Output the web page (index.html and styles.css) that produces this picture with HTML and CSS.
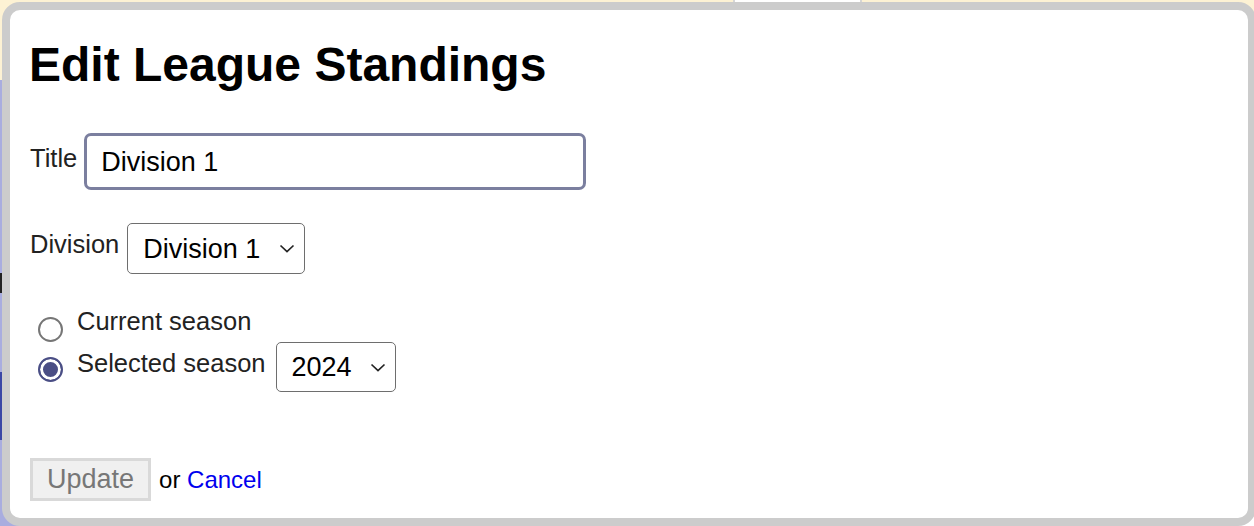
FILE: index.html
```html
<!DOCTYPE html>
<html lang="en">
<head>
  <meta charset="UTF-8">
  <meta name="viewport" content="width=device-width, initial-scale=1.0">
  <title>Edit League Standings</title>
  <link rel="stylesheet" href="styles.css">
</head>
<body>
  <div class="page">
    <header class="topbar">
      <span class="tab"></span>
    </header>
    <aside class="sidebar">
      <span class="nav-item"></span>
      <span class="nav-item active"></span>
    </aside>
    <main class="main"></main>
  </div>

  <div class="dialog">
    <h1>Edit League Standings</h1>
    <form class="standings-form">
      <div class="row row-title">
        <label class="lbl" for="title">Title</label>
        <input class="text" type="text" id="title" value="Division 1">
      </div>
      <div class="row row-division">
        <label class="lbl" for="division">Division</label>
        <span class="select">
          <select id="division">
            <option>Division 1</option>
            <option>Division 2</option>
            <option>Division 3</option>
          </select>
          <svg class="chevron" width="16" height="9" viewBox="0 0 16 9"><polyline points="1.5,1.5 8,7.5 14.5,1.5" fill="none" stroke="#222" stroke-width="1.7"/></svg>
        </span>
      </div>
      <div class="row row-season">
        <label class="choice">
          <input class="radio" type="radio" name="season" value="current">
          <span>Current season</span>
        </label>
      </div>
      <div class="row row-season">
        <label class="choice choice-offset">
          <input class="radio" type="radio" name="season" value="selected" checked>
          <span>Selected season</span>
        </label>
        <span class="select season-select">
          <select id="season">
            <option>2024</option>
            <option>2023</option>
            <option>2022</option>
          </select>
          <svg class="chevron" width="16" height="9" viewBox="0 0 16 9"><polyline points="1.5,1.5 8,7.5 14.5,1.5" fill="none" stroke="#222" stroke-width="1.7"/></svg>
        </span>
      </div>
      <div class="actions">
        <button type="submit" disabled>Update</button>
        <span class="or">or <a href="#">Cancel</a></span>
      </div>
    </form>
  </div>
</body>
</html>
```

FILE: styles.css
```css
body {
  margin: 0;
  font-family: "Liberation Sans", Arial, sans-serif;
  background: #ffffff;
}
.page {
  display: grid;
  grid-template-columns: 200px 1fr;
  grid-template-rows: 80px 1fr;
  height: 100vh;
}
.topbar {
  grid-column: 1 / 3;
  background: #fdf2d4;
  display: flex;
  padding-left: 733px;
}
.tab {
  width: 125px;
  background: #ffffff;
  border-left: 2px solid #d6d6d6;
  border-right: 2px solid #d6d6d6;
}
.sidebar {
  background: #a9addf;
  display: flex;
  flex-direction: column;
}
.nav-item {
  height: 20px;
  margin-top: 193px;
  background: #222;
}
.nav-item.active {
  height: 68px;
  margin-top: 79px;
  background: #3b47a6;
}

.dialog {
  position: fixed;
  left: 2px;
  top: 2px;
  width: 1254px;
  height: 524px;
  box-sizing: border-box;
  border: 8px solid #cccccc;
  border-radius: 18px;
  background: #ffffff;
  padding: 27px 20px;
}
h1 {
  margin: 0 0 40px -1px;
  font-size: 48px;
  line-height: 56px;
  font-weight: bold;
  color: #000;
}
.row {
  display: flex;
  align-items: flex-start;
}
.row-title {
  gap: 7px;
  margin-bottom: 33px;
}
.row-division {
  gap: 8px;
  margin-bottom: 32px;
}
.row-season {
  margin-bottom: 6px;
}
.lbl, .choice {
  font-size: 25.5px;
  line-height: 30px;
  color: #222;
}
.row-title .lbl {
  margin-top: 10px;
}
.row-division .lbl {
  margin-top: 6px;
}
.text {
  width: 502px;
  height: 57px;
  box-sizing: border-box;
  border: 3px solid #7b7f9f;
  border-radius: 7px;
  padding: 2px 14px 0;
  font-family: inherit;
  font-size: 27px;
  color: #000;
  outline: none;
}
.select {
  position: relative;
  display: inline-flex;
}
select {
  appearance: none;
  height: 51px;
  box-sizing: border-box;
  border: 1px solid #6e6e6e;
  border-radius: 5px;
  background: #ffffff;
  padding: 0 43px 0 15px;
  font-family: inherit;
  font-size: 27px;
  color: #000;
}
.season-select {
  margin-left: 10px;
}
.season-select select {
  height: 50px;
  padding-right: 42px;
}
.chevron {
  position: absolute;
  right: 10px;
  top: 21px;
  pointer-events: none;
}
.choice {
  display: flex;
  align-items: flex-start;
}
.choice-offset {
  margin-top: 6px;
}
.radio {
  appearance: none;
  width: 25px;
  height: 25px;
  margin: 11px 14px -6px 8px;
  box-sizing: border-box;
  border: 2px solid #767676;
  border-radius: 50%;
  background: #ffffff;
}
.choice-offset .radio {
  margin-top: 9px;
}
.radio:checked {
  border-color: #4a4e85;
  background: #4a4e85;
  box-shadow: inset 0 0 0 3px #ffffff;
}
.actions {
  display: flex;
  align-items: center;
  margin-top: 66px;
}
button {
  height: 43px;
  box-sizing: border-box;
  border: 3px solid #d9d9d9;
  background: #f0f0f0;
  color: #777777;
  padding: 0 14px;
  font-family: inherit;
  font-size: 27px;
}
.or {
  margin-left: 8px;
  font-size: 24px;
  color: #000;
}
.or a {
  color: #0000ee;
  text-decoration: none;
}
```
